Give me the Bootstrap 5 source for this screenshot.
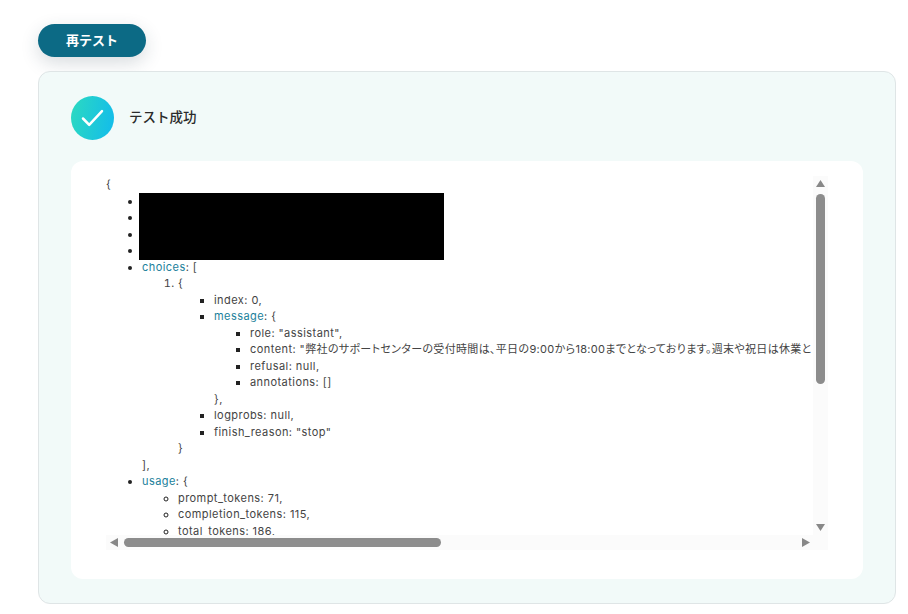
<!DOCTYPE html>
<html lang="ja">
<head>
<meta charset="utf-8">
<title>テスト成功</title>
<link href="https://cdn.jsdelivr.net/npm/bootstrap@5.3.0/dist/css/bootstrap.min.css" rel="stylesheet">
<style>
html, body { height: 100%; overflow: hidden; }
body { background: #fff; font-family: Inter, "Noto Sans CJK JP", sans-serif; color: #444; }
.page-wrap { padding: 24px 12px 0 38px; }
.retest-btn { width: 108px; height: 33px; padding: 0 0 2px; border: 0; border-radius: 17px; background: #0c6a85; color: #fff; font: 700 13px "Noto Sans CJK JP", sans-serif; box-shadow: 0 6px 18px rgba(40,60,80,.18); }
.result-box { margin-top: 14px; height: 533px; padding: 24px 32px; background: #f2faf9; border: 1px solid #dfe5e6; border-radius: 12px; }
.status-icon { width: 43px; height: 44px; flex: none; border-radius: 50%; background: linear-gradient(100deg, #2cdac0, #12bbec); }
.status-title { font: 500 13.5px "Noto Sans CJK JP", sans-serif; color: #2b2b2b; margin: 0 0 4px 15px; }
.json-panel { margin-top: 21px; height: 418px; padding: 15px 34px 29px 35px; background: #fff; border-radius: 12px; }
.json-frame { display: grid; grid-template-columns: 707px 15px; grid-template-rows: 359px 15px; }
.json-view { overflow: hidden; font-size: 11px; line-height: 16.5px; color: #444; letter-spacing: .04em; font-feature-settings: "palt"; }
.json-view ul, .json-view ol { margin: 0; padding-left: 36px; }
.json-view ul > li::marker { color: #222; }
.json-key { color: #1b7f9b; }
.jp-run { letter-spacing: .03em; }
.redacted { display: block; width: 305px; height: 16.5px; margin-left: -3px; background: #000; }
li:nth-child(4) > .redacted { box-shadow: 0 1px 0 #000; }
.one-line { white-space: nowrap; }
.bar-y, .bar-x, .bar-corner { background: #fbfbfb; }
.bar-y { display: flex; flex-direction: column; align-items: center; }
.bar-x { display: flex; align-items: center; }
.bar-btn { width: 15px; height: 15px; flex: none; display: flex; align-items: center; justify-content: center; }
.bar-y .bar-btn + .thumb-y { margin-top: 3px; }
.thumb-y { width: 9px; height: 190px; border-radius: 5px; background: #8c8c8c; }
.thumb-x { width: 317px; height: 9px; border-radius: 5px; background: #8c8c8c; margin-left: 3px; }
.bar-fill { flex: 1 1 auto; }
</style>
</head>
<body>
<div class="page-wrap">
  <button type="button" class="btn retest-btn d-block">再テスト</button>
  <div class="result-box">
    <div class="d-flex align-items-center">
      <div class="status-icon d-flex align-items-center justify-content-center">
        <svg width="23" height="18" viewBox="0 0 23 18" fill="none"><path d="M2 9.5L8.2 15.8L21 2.2" stroke="#fff" stroke-width="2.5" stroke-linecap="round" stroke-linejoin="round"/></svg>
      </div>
      <div class="status-title">テスト成功</div>
    </div>
    <div class="json-panel">
      <div class="json-frame">
        <div class="json-view">
          {
          <ul>
            <li><span class="redacted"></span></li>
            <li><span class="redacted"></span></li>
            <li><span class="redacted"></span></li>
            <li><span class="redacted"></span></li>
            <li><span class="json-key">choices</span>: [
              <ol>
                <li>{
                  <ul>
                    <li>index: 0,</li>
                    <li><span class="json-key">message</span>: {
                      <ul>
                        <li class="one-line">role: "assistant",</li>
                        <li class="one-line">content: "<span class="jp-run">弊社のサポートセンターの受付時間は、平日の9:00から18:00までとなっております。週末や祝日は休業と</span></li>
                        <li>refusal: null,</li>
                        <li>annotations: []</li>
                      </ul>
                      },
                    </li>
                    <li>logprobs: null,</li>
                    <li>finish_reason: "stop"</li>
                  </ul>
                  }
                </li>
              </ol>
              ],
            </li>
            <li><span class="json-key">usage</span>: {
              <ul>
                <li>prompt_tokens: 71,</li>
                <li>completion_tokens: 115,</li>
                <li>total_tokens: 186,</li>
              </ul>
            </li>
          </ul>
        </div>
        <div class="bar-y">
          <div class="bar-btn"><svg width="9" height="7"><path d="M4.5 0L9 7H0z" fill="#888"/></svg></div>
          <div class="thumb-y"></div>
          <div class="bar-fill"></div>
          <div class="bar-btn"><svg width="9" height="7"><path d="M0 0H9L4.5 7z" fill="#888"/></svg></div>
        </div>
        <div class="bar-x">
          <div class="bar-btn"><svg width="8" height="9"><path d="M8 0V9L0 4.5z" fill="#888"/></svg></div>
          <div class="thumb-x"></div>
          <div class="bar-fill"></div>
          <div class="bar-btn"><svg width="8" height="9"><path d="M0 0V9L8 4.5z" fill="#888"/></svg></div>
        </div>
        <div class="bar-corner"></div>
      </div>
    </div>
  </div>
</div>
<script src="https://cdn.jsdelivr.net/npm/bootstrap@5.3.0/dist/js/bootstrap.bundle.min.js"></script>
</body>
</html>
